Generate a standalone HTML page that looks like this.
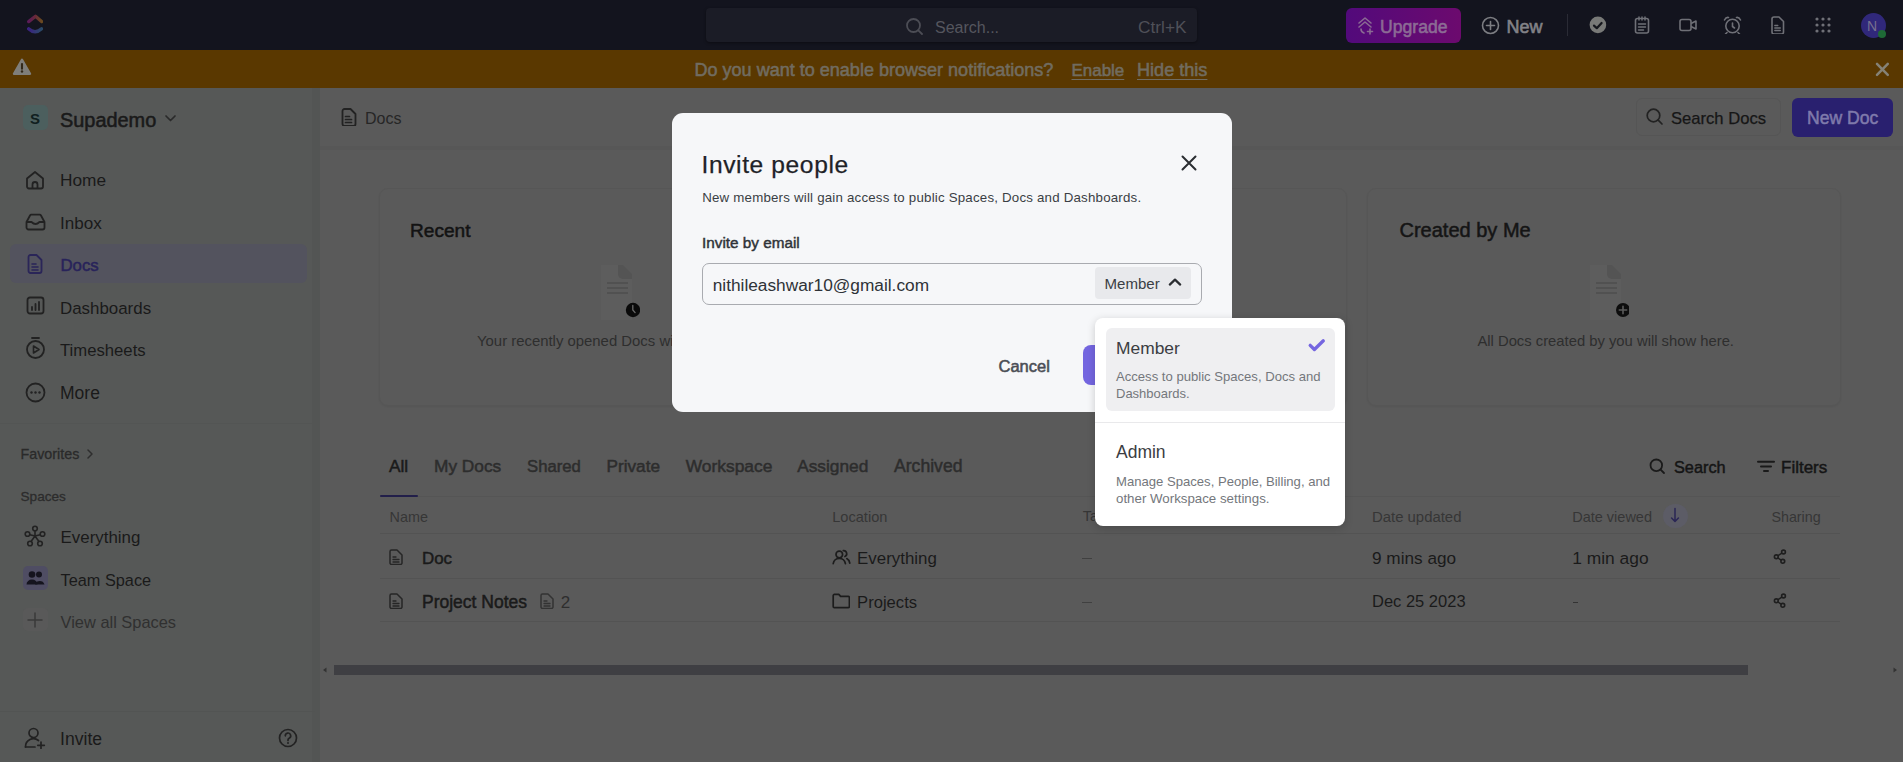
<!DOCTYPE html>
<html><head><meta charset="utf-8"><title>Docs</title>
<style>
html,body{margin:0;padding:0;width:1903px;height:762px;overflow:hidden;background:#5b5b5b}
body{position:relative;font-family:"Liberation Sans",sans-serif}
.t{position:absolute;line-height:1;white-space:nowrap}
.r{position:absolute;display:block}
.m{display:inline-block;width:0;height:0}
</style></head><body>
<div class="r" style="left:0px;top:0px;width:1903px;height:50px;background:#13141e"></div>
<svg class="r" style="left:24px;top:12px;" width="22" height="24" viewBox="0 0 22 24"><defs><linearGradient id="lg1" x1="0" x2="1"><stop offset="0" stop-color="#5c1a58"/><stop offset=".5" stop-color="#682a3a"/><stop offset="1" stop-color="#6a4a20"/></linearGradient>
<linearGradient id="lg2" x1="0" x2="1"><stop offset="0" stop-color="#3a2280"/><stop offset="1" stop-color="#2a4a68"/></linearGradient><filter id="bl"><feGaussianBlur stdDeviation="0.45"/></filter></defs>
<g filter="url(#bl)"><path d="M4.7 9.6 L11.5 4.2 L17.6 9.6" fill="none" stroke="url(#lg1)" stroke-width="3.3" stroke-linecap="round" stroke-linejoin="round"/>
<path d="M4.6 16.8 Q11 22.8 17.6 16.8" fill="none" stroke="url(#lg2)" stroke-width="3.3" stroke-linecap="round"/></g></svg>
<div class="r" style="left:706px;top:8px;width:491px;height:33.5px;background:#1b1c26;border-radius:4px;box-shadow:0 1px 3px rgba(0,0,0,.4)"></div>
<svg class="r" style="left:905px;top:17px;" width="20" height="18" viewBox="0 0 20 18"><circle cx="8.5" cy="8.5" r="6.5" fill="none" stroke="#4c4d55" stroke-width="1.8"/><path d="M13.3 13.3 L17 17" stroke="#4c4d55" stroke-width="1.8" stroke-linecap="round"/></svg>
<div class="t " id="t0" style="left:935px;top:20.00px;font-size:16px;color:#55565e;font-weight:400;">Search...<i class="m"></i></div>
<div class="t " id="t1" style="left:1138px;top:19.00px;font-size:17.3px;color:#4f5058;font-weight:400;">Ctrl+K<i class="m"></i></div>
<div class="r" style="left:1345.5px;top:8px;width:115px;height:34.5px;background:linear-gradient(90deg,#520a7b,#6c0a6e);border-radius:6px"></div>
<svg class="r" style="left:1356px;top:16px;" width="19" height="19" viewBox="0 0 19 19"><path d="M3 7 L9 2 L15 7 M3 11 L9 6 L15 11" fill="none" stroke="#8a6a93" stroke-width="1.6" stroke-linecap="round" stroke-linejoin="round"/><path d="M5 13 Q5 16 8 17 M14 13 v5 M11.5 15.5 h5" fill="none" stroke="#8a6a93" stroke-width="1.6" stroke-linecap="round"/></svg>
<div class="t " id="t2" style="left:1380px;top:19.00px;font-size:17.6px;color:#8c6c95;font-weight:400;-webkit-text-stroke:0.55px #8c6c95;">Upgrade<i class="m"></i></div>
<svg class="r" style="left:1481px;top:16px;" width="19" height="19" viewBox="0 0 19 19"><circle cx="9.5" cy="9.5" r="8" fill="none" stroke="#7c7d82" stroke-width="1.6"/><path d="M9.5 5.5 v8 M5.5 9.5 h8" stroke="#7c7d82" stroke-width="1.6" stroke-linecap="round"/></svg>
<div class="t " id="t3" style="left:1506.5px;top:17.50px;font-size:18px;color:#828287;font-weight:400;-webkit-text-stroke:0.6px #828287;">New<i class="m"></i></div>
<div class="r" style="left:1567px;top:14px;width:1px;height:22px;background:#2a2b35"></div>
<svg class="r" style="left:1589px;top:16px;" width="18" height="18" viewBox="0 0 18 18"><circle cx="8.9" cy="8.9" r="8.3" fill="#787977"/><path d="M5 9.6 L7.8 12.2 L12.6 7" fill="none" stroke="#15161c" stroke-width="2.2" stroke-linecap="round" stroke-linejoin="round"/></svg>
<svg class="r" style="left:1634px;top:16px;" width="17" height="18" viewBox="0 0 17 18"><rect x="1.5" y="2.5" width="13" height="14.5" rx="2" fill="none" stroke="#6f7077" stroke-width="1.6"/><path d="M5 1 v3 M8 1 v3 M11 1 v3 M4.5 8 h7 M4.5 11 h7 M4.5 14 h5" stroke="#6f7077" stroke-width="1.5" stroke-linecap="round"/></svg>
<svg class="r" style="left:1679px;top:18px;" width="18" height="14" viewBox="0 0 18 14"><rect x="1" y="1.5" width="11" height="11" rx="2" fill="none" stroke="#6f7077" stroke-width="1.6"/><path d="M12 5.5 L17 3 V11 L12 8.5" fill="none" stroke="#6f7077" stroke-width="1.6" stroke-linejoin="round"/></svg>
<svg class="r" style="left:1723px;top:16px;" width="19" height="18" viewBox="0 0 19 18"><circle cx="9.5" cy="10" r="6.7" fill="none" stroke="#6f7077" stroke-width="1.6"/><path d="M9.5 7 v3.5 l2 1.5" fill="none" stroke="#6f7077" stroke-width="1.6" stroke-linecap="round"/><path d="M1.5 4 Q3 1 5.5 1.5 M17.5 4 Q16 1 13.5 1.5 M4 16.5 l-1.5 1.5 M15 16.5 l1.5 1.5" fill="none" stroke="#6f7077" stroke-width="1.6" stroke-linecap="round"/></svg>
<svg class="r" style="left:1770px;top:16px;" width="15" height="18" viewBox="0 0 15 18"><path d="M2 3 a2 2 0 0 1 2-2 h5 l4.5 4.5 v10.5 a2 2 0 0 1 -2 2 h-7.5 a2 2 0 0 1 -2-2z" fill="none" stroke="#6f7077" stroke-width="1.6" stroke-linejoin="round"/><path d="M4.8 9.5 h3 M4.8 12 h5.5 M4.8 14.5 h5.5" stroke="#6f7077" stroke-width="1.4" stroke-linecap="round"/></svg>
<svg class="r" style="left:1815px;top:17px;" width="16" height="16" viewBox="0 0 16 16"><circle cx="2" cy="2" r="1.6" fill="#6f7077"/><circle cx="2" cy="8" r="1.6" fill="#6f7077"/><circle cx="2" cy="14" r="1.6" fill="#6f7077"/><circle cx="8" cy="2" r="1.6" fill="#6f7077"/><circle cx="8" cy="8" r="1.6" fill="#6f7077"/><circle cx="8" cy="14" r="1.6" fill="#6f7077"/><circle cx="14" cy="2" r="1.6" fill="#6f7077"/><circle cx="14" cy="8" r="1.6" fill="#6f7077"/><circle cx="14" cy="14" r="1.6" fill="#6f7077"/></svg>
<div class="r" style="left:1861px;top:13px;width:25px;height:25px;background:#30287a;border-radius:50%"></div>
<div class="t " id="t4" style="left:1867px;top:18.51px;font-size:14px;color:#77718f;font-weight:400;">N<i class="m"></i></div>
<div class="r" style="left:1878px;top:29.5px;width:8px;height:8px;background:#1e6a36;border-radius:50%"></div>
<div class="r" style="left:0px;top:49.5px;width:1903px;height:38.5px;background:#5a3800"></div>
<svg class="r" style="left:12px;top:57px;" width="20" height="19" viewBox="0 0 20 19"><path d="M10 2.8 L18 16.8 H2 Z" fill="#7f7e7a" stroke="#7f7e7a" stroke-width="2.4" stroke-linejoin="round"/><path d="M10 7 v4.8" stroke="#33291a" stroke-width="2.1" stroke-linecap="round"/><circle cx="10" cy="14.5" r="1.2" fill="#33291a"/></svg>
<div class="t " id="t5" style="left:694.5px;top:61.00px;font-size:18.05px;color:#716c60;font-weight:400;-webkit-text-stroke:0.55px #716c60;">Do you want to enable browser notifications?<i class="m"></i></div>
<div class="t " id="t6" style="left:1071.5px;top:63.00px;font-size:16.95px;color:#716c60;font-weight:400;text-decoration:underline;text-underline-offset:3px;-webkit-text-stroke:0.55px #716c60;">Enable<i class="m"></i></div>
<div class="t " id="t7" style="left:1137px;top:61.00px;font-size:18.1px;color:#716c60;font-weight:400;text-decoration:underline;text-underline-offset:3px;-webkit-text-stroke:0.55px #716c60;">Hide this<i class="m"></i></div>
<svg class="r" style="left:1875px;top:62px;" width="15" height="15" viewBox="0 0 15 15"><path d="M2 1.8 L12.8 12.8 M12.8 1.8 L2 12.8" stroke="#858276" stroke-width="2.5" stroke-linecap="round"/></svg>
<div class="r" style="left:0px;top:88px;width:319px;height:674px;background:#565857"></div>
<div class="r" style="left:312px;top:88px;width:8px;height:674px;background:#535554"></div>
<div class="r" style="left:23px;top:105px;width:25px;height:25px;background:#4c5f5e;border-radius:5px"></div>
<div class="t " id="t8" style="left:30px;top:111.01px;font-size:15px;color:#10201f;font-weight:700;">S<i class="m"></i></div>
<div class="t " id="t9" style="left:60px;top:111.00px;font-size:19.9px;color:#1a1a1a;font-weight:400;-webkit-text-stroke:0.55px #1a1a1a;">Supademo<i class="m"></i></div>
<svg class="r" style="left:164px;top:114px;" width="13" height="9" viewBox="0 0 13 9"><path d="M2 2 L6.5 6.5 L11 2" fill="none" stroke="#2a2a2a" stroke-width="1.7" stroke-linecap="round" stroke-linejoin="round"/></svg>
<div class="r" style="left:10px;top:244px;width:297px;height:39px;background:#53535e;border-radius:6px"></div>
<svg class="r" style="left:25px;top:170px;" width="20" height="20" viewBox="0 0 20 20"><path d="M2 8.5 L10 2 L18 8.5 V16.5 a2 2 0 0 1 -2 2 H4 a2 2 0 0 1 -2-2z" fill="none" stroke="#222222" stroke-width="1.8" stroke-linejoin="round"/><path d="M7.5 18.5 v-4 a2.5 2.5 0 0 1 5 0 v4" fill="none" stroke="#222222" stroke-width="1.8"/></svg>
<div class="t " id="t10" style="left:60px;top:172.00px;font-size:17.3px;color:#1a1a1a;font-weight:400;">Home<i class="m"></i></div>
<svg class="r" style="left:25px;top:213px;" width="21" height="18" viewBox="0 0 21 18"><path d="M1.5 9 L5 2.5 a1.5 1.5 0 0 1 1.3-.8 h8.4 a1.5 1.5 0 0 1 1.3.8 L19.5 9 V14.5 a2 2 0 0 1 -2 2 H3.5 a2 2 0 0 1 -2-2z" fill="none" stroke="#222222" stroke-width="1.8" stroke-linejoin="round"/><path d="M1.5 9 H6.5 Q10.5 13 14.5 9 H19.5" fill="none" stroke="#222222" stroke-width="1.8" stroke-linejoin="round"/></svg>
<div class="t " id="t11" style="left:60px;top:215.00px;font-size:17.1px;color:#1a1a1a;font-weight:400;">Inbox<i class="m"></i></div>
<svg class="r" style="left:27px;top:254px;" width="16" height="20" viewBox="0 0 16 20"><path d="M1.5 3 a2 2 0 0 1 2-2 h6 l5 5 v11 a2 2 0 0 1 -2 2 h-9 a2 2 0 0 1 -2-2z" fill="none" stroke="#2a2558" stroke-width="1.8" stroke-linejoin="round"/><path d="M5 10 h4 M5 13 h6 M5 16 h6" stroke="#2a2558" stroke-width="1.6" stroke-linecap="round"/></svg>
<div class="t " id="t12" style="left:60.5px;top:258.00px;font-size:16.8px;color:#28235a;font-weight:400;-webkit-text-stroke:0.5px #28235a;">Docs<i class="m"></i></div>
<svg class="r" style="left:26px;top:296px;" width="19" height="19" viewBox="0 0 19 19"><rect x="1.5" y="1.5" width="16" height="16" rx="2.5" fill="none" stroke="#222222" stroke-width="1.8"/><path d="M6 14 v-3 M9.5 14 v-6 M13 14 v-8" stroke="#222222" stroke-width="1.8" stroke-linecap="round"/></svg>
<div class="t " id="t13" style="left:60px;top:300.61px;font-size:16.9px;color:#1a1a1a;font-weight:400;">Dashboards<i class="m"></i></div>
<svg class="r" style="left:25px;top:336px;" width="21" height="24" viewBox="0 0 21 24"><circle cx="10.5" cy="13.5" r="8.5" fill="none" stroke="#222222" stroke-width="1.8"/><path d="M7 2 h7" stroke="#222222" stroke-width="1.8" stroke-linecap="round"/><path d="M8.5 10 L14 13.5 L8.5 17z" fill="none" stroke="#222222" stroke-width="1.6" stroke-linejoin="round"/></svg>
<div class="t " id="t14" style="left:60px;top:342.71px;font-size:16.7px;color:#1a1a1a;font-weight:400;">Timesheets<i class="m"></i></div>
<svg class="r" style="left:25px;top:382px;" width="21" height="21" viewBox="0 0 21 21"><circle cx="10.5" cy="10.5" r="9" fill="none" stroke="#222222" stroke-width="1.8"/><circle cx="6.5" cy="10.5" r="1.2" fill="#222222"/><circle cx="10.5" cy="10.5" r="1.2" fill="#222222"/><circle cx="14.5" cy="10.5" r="1.2" fill="#222222"/></svg>
<div class="t " id="t15" style="left:60px;top:384.50px;font-size:17.5px;color:#1a1a1a;font-weight:400;">More<i class="m"></i></div>
<div class="t " id="t16" style="left:20.5px;top:447.01px;font-size:14.3px;color:#2a2a2a;font-weight:400;-webkit-text-stroke:0.3px #2a2a2a;">Favorites<i class="m"></i></div>
<svg class="r" style="left:86px;top:448px;" width="8" height="12" viewBox="0 0 8 12"><path d="M2 2 L6 6 L2 10" fill="none" stroke="#2e2e2e" stroke-width="1.5" stroke-linecap="round" stroke-linejoin="round"/></svg>
<div class="t " id="t17" style="left:20.5px;top:490.01px;font-size:13.6px;color:#2c2c2c;font-weight:400;-webkit-text-stroke:0.3px #2c2c2c;">Spaces<i class="m"></i></div>
<svg class="r" style="left:24px;top:525px;" width="22" height="22" viewBox="0 0 22 22"><circle cx="11" cy="3.5" r="2.3" fill="none" stroke="#222222" stroke-width="1.6"/><circle cx="3.5" cy="9" r="2.3" fill="none" stroke="#222222" stroke-width="1.6"/><circle cx="18.5" cy="9" r="2.3" fill="none" stroke="#222222" stroke-width="1.6"/><circle cx="6" cy="18.5" r="2.3" fill="none" stroke="#222222" stroke-width="1.6"/><circle cx="16" cy="18.5" r="2.3" fill="none" stroke="#222222" stroke-width="1.6"/><path d="M11 6 V11 M5.8 9.8 L11 11 L16.2 9.8 M7.2 16.3 L11 11 L14.8 16.3" fill="none" stroke="#222222" stroke-width="1.6"/></svg>
<div class="t " id="t18" style="left:60.6px;top:529.50px;font-size:16.9px;color:#1a1a1a;font-weight:400;">Everything<i class="m"></i></div>
<div class="r" style="left:23px;top:566px;width:25px;height:24px;background:#4f4d63;border-radius:5px"></div>
<svg class="r" style="left:26px;top:570px;" width="19" height="16" viewBox="0 0 19 16"><circle cx="6" cy="4.5" r="3.3" fill="#15141e"/><circle cx="13" cy="4.5" r="3" fill="#15141e"/><path d="M0.5 14.5 a5.5 5 0 0 1 11 0z" fill="#15141e"/><path d="M9 14.5 a5 5 0 0 1 9.5 0z" fill="#15141e"/></svg>
<div class="t " id="t19" style="left:60.6px;top:571.70px;font-size:16.3px;color:#1a1a1a;font-weight:400;">Team Space<i class="m"></i></div>
<div class="r" style="left:23px;top:608px;width:25px;height:23px;background:#595959;border-radius:5px"></div>
<svg class="r" style="left:27px;top:612px;" width="16" height="16" viewBox="0 0 16 16"><path d="M8 1 V15 M1 8 H15" stroke="#3a3a3a" stroke-width="1.5" stroke-linecap="round"/></svg>
<div class="t " id="t20" style="left:60.6px;top:614.00px;font-size:16.4px;color:#303030;font-weight:400;">View all Spaces<i class="m"></i></div>
<div class="r" style="left:0px;top:711px;width:315px;height:1px;background:#525453"></div>
<div class="r" style="left:0px;top:423px;width:315px;height:1px;background:#535554"></div>
<svg class="r" style="left:24px;top:727px;" width="22" height="22" viewBox="0 0 22 22"><circle cx="9.5" cy="6" r="4.5" fill="none" stroke="#222222" stroke-width="1.7"/><path d="M1.5 20 a8 8 0 0 1 13-6.5" fill="none" stroke="#222222" stroke-width="1.7" stroke-linecap="round"/><path d="M1.5 20 H11" stroke="#222222" stroke-width="1.7" stroke-linecap="round"/><path d="M17 15 v6.5 M13.8 18.3 h6.5" stroke="#222222" stroke-width="1.7" stroke-linecap="round"/></svg>
<div class="t " id="t21" style="left:60px;top:730.61px;font-size:17.6px;color:#1a1a1a;font-weight:400;">Invite<i class="m"></i></div>
<svg class="r" style="left:278px;top:728px;" width="20" height="20" viewBox="0 0 20 20"><circle cx="10" cy="10" r="8.5" fill="none" stroke="#222222" stroke-width="1.7"/><path d="M7.3 7.8 a2.7 2.7 0 1 1 3.8 2.4 c-.8.4 -1.1 .9 -1.1 1.8 v.5" fill="none" stroke="#222222" stroke-width="1.7" stroke-linecap="round"/><circle cx="10" cy="15" r="1" fill="#222222"/></svg>
<div class="r" style="left:320px;top:88px;width:1583px;height:674px;background:#5a5a5a"></div>
<div class="r" style="left:320px;top:146px;width:1583px;height:4px;background:#575757"></div>
<svg class="r" style="left:341px;top:108px;" width="16" height="18" viewBox="0 0 16 18"><path d="M1.5 3 a2 2 0 0 1 2-2 h6 l5 5 v10 a2 2 0 0 1 -2 2 h-9 a2 2 0 0 1 -2-2z" fill="none" stroke="#222" stroke-width="1.8" stroke-linejoin="round"/><path d="M4.5 8.5 h4 M4.5 11.5 h6 M4.5 14.5 h6" stroke="#222" stroke-width="1.7" stroke-linecap="round"/></svg>
<div class="t " id="t22" style="left:365px;top:110.50px;font-size:16px;color:#262626;font-weight:400;">Docs<i class="m"></i></div>
<div class="r" style="left:1636px;top:98px;width:145px;height:38px;border:1px solid #555;border-radius:6px;box-sizing:border-box"></div>
<svg class="r" style="left:1646px;top:108px;" width="18" height="18" viewBox="0 0 18 18"><circle cx="7.5" cy="7.5" r="6.3" fill="none" stroke="#222" stroke-width="1.7"/><path d="M12.2 12.2 L16 16" stroke="#222" stroke-width="1.7" stroke-linecap="round"/></svg>
<div class="t " id="t23" style="left:1671px;top:110.71px;font-size:16.6px;color:#161616;font-weight:400;-webkit-text-stroke:0.25px #161616;">Search Docs<i class="m"></i></div>
<div class="r" style="left:1792px;top:98px;width:101px;height:39px;background:#29206f;border-radius:6px"></div>
<div class="t " id="t24" style="left:1807px;top:109.70px;font-size:17.6px;color:#7f7aab;font-weight:400;-webkit-text-stroke:0.5px #7f7aab;">New Doc<i class="m"></i></div>
<div class="r" style="left:379px;top:188px;width:474px;height:218px;border:1px solid #565656;border-radius:9px;box-sizing:border-box;box-shadow:0 1px 2px rgba(0,0,0,.06)"></div>
<div class="r" style="left:873px;top:188px;width:474px;height:218px;border:1px solid #565656;border-radius:9px;box-sizing:border-box;box-shadow:0 1px 2px rgba(0,0,0,.06)"></div>
<div class="r" style="left:1367px;top:188px;width:474px;height:218px;border:1px solid #565656;border-radius:9px;box-sizing:border-box;box-shadow:0 1px 2px rgba(0,0,0,.06)"></div>
<div class="t " id="t25" style="left:410px;top:221.32px;font-size:19.1px;color:#131313;font-weight:400;-webkit-text-stroke:0.5px #131313;">Recent<i class="m"></i></div>
<div class="t " id="t26" style="left:1399.5px;top:220.01px;font-size:20.0px;color:#151515;font-weight:400;-webkit-text-stroke:0.5px #151515;">Created by Me<i class="m"></i></div>
<svg class="r" style="left:599.5px;top:263.5px;" width="40" height="58" viewBox="0 0 40 58"><path d="M1 1 h22 l9 9 v46 h-31z" fill="#5d5d5d"/><path d="M18 1 h5 l9 9 v5 h-9 a5 5 0 0 1 -5-5z" fill="#545454"/>
<path d="M7 19 h21 M7 24 h21 M7 29 h21" stroke="#4e4e4e" stroke-width="1.5"/><circle cx="33" cy="46" r="7.2" fill="#0a0a0a"/><path d="M32.8 41.5 v4.5 l2.3 2.6" stroke="#6a6a6a" stroke-width="1.3" fill="none" stroke-linecap="round"/></svg>
<svg class="r" style="left:1588.5px;top:263.5px;" width="40" height="58" viewBox="0 0 40 58"><path d="M1 1 h22 l9 9 v46 h-31z" fill="#5d5d5d"/><path d="M18 1 h5 l9 9 v5 h-9 a5 5 0 0 1 -5-5z" fill="#545454"/>
<path d="M7 19 h21 M7 24 h21 M7 29 h21" stroke="#4e4e4e" stroke-width="1.5"/><circle cx="34" cy="46" r="7" fill="#0d0d0d"/><path d="M34 42.3 v7.4 M30.3 46 h7.4" stroke="#5b5b5b" stroke-width="1.6" stroke-linecap="round"/></svg>
<div class="t " id="t27" style="left:477px;top:334.31px;font-size:14.9px;color:#2e2e2e;font-weight:400;">Your recently opened Docs will show here.<i class="m"></i></div>
<div class="t " id="t28" style="left:1477.4px;top:334.01px;font-size:14.8px;color:#2e2e2e;font-weight:400;">All Docs created by you will show here.<i class="m"></i></div>
<div class="t " id="t29" style="left:389px;top:458.41px;font-size:17.3px;color:#1a1a1a;font-weight:400;-webkit-text-stroke:0.5px #1a1a1a;">All<i class="m"></i></div>
<div class="t " id="t30" style="left:434px;top:458.41px;font-size:17.3px;color:#2d2d2d;font-weight:400;-webkit-text-stroke:0.5px #2d2d2d;">My Docs<i class="m"></i></div>
<div class="t " id="t31" style="left:527px;top:459.41px;font-size:16.7px;color:#2d2d2d;font-weight:400;-webkit-text-stroke:0.5px #2d2d2d;">Shared<i class="m"></i></div>
<div class="t " id="t32" style="left:606.5px;top:458.41px;font-size:17.2px;color:#2d2d2d;font-weight:400;-webkit-text-stroke:0.5px #2d2d2d;">Private<i class="m"></i></div>
<div class="t " id="t33" style="left:685.7px;top:458.41px;font-size:17.4px;color:#2d2d2d;font-weight:400;-webkit-text-stroke:0.5px #2d2d2d;">Workspace<i class="m"></i></div>
<div class="t " id="t34" style="left:797.2px;top:458.41px;font-size:17.3px;color:#2d2d2d;font-weight:400;-webkit-text-stroke:0.5px #2d2d2d;">Assigned<i class="m"></i></div>
<div class="t " id="t35" style="left:894px;top:458.41px;font-size:17.6px;color:#2d2d2d;font-weight:400;-webkit-text-stroke:0.5px #2d2d2d;">Archived<i class="m"></i></div>
<div class="r" style="left:380px;top:496px;width:1460px;height:1px;background:#555555"></div>
<div class="r" style="left:380px;top:494.8px;width:38px;height:2.2px;background:#221f4a;border-radius:1px"></div>
<svg class="r" style="left:1649px;top:458px;" width="17" height="17" viewBox="0 0 17 17"><circle cx="7.3" cy="7.3" r="5.8" fill="none" stroke="#1a1a1a" stroke-width="1.8"/><path d="M11.6 11.6 L15 15" stroke="#1a1a1a" stroke-width="1.8" stroke-linecap="round"/></svg>
<div class="t " id="t36" style="left:1674px;top:459.10px;font-size:16.3px;color:#151515;font-weight:400;-webkit-text-stroke:0.45px #151515;">Search<i class="m"></i></div>
<svg class="r" style="left:1756px;top:459px;" width="20" height="15" viewBox="0 0 20 15"><path d="M2 2.8 h16 M5 7.4 h10 M8 12 h4" stroke="#1a1a1a" stroke-width="2" stroke-linecap="round"/></svg>
<div class="t " id="t37" style="left:1781px;top:459.11px;font-size:17.0px;color:#151515;font-weight:400;-webkit-text-stroke:0.45px #151515;">Filters<i class="m"></i></div>
<div class="t " id="t38" style="left:389.5px;top:509.81px;font-size:14.4px;color:#363636;font-weight:400;">Name<i class="m"></i></div>
<div class="t " id="t39" style="left:832.2px;top:510.01px;font-size:14.6px;color:#363636;font-weight:400;">Location<i class="m"></i></div>
<div class="t " id="t40" style="left:1082.7px;top:509.01px;font-size:14.5px;color:#363636;font-weight:400;">Tags<i class="m"></i></div>
<div class="t " id="t41" style="left:1372px;top:510.01px;font-size:14.9px;color:#363636;font-weight:400;">Date updated<i class="m"></i></div>
<div class="t " id="t42" style="left:1572.2px;top:510.01px;font-size:14.5px;color:#363636;font-weight:400;">Date viewed<i class="m"></i></div>
<div class="r" style="left:1663px;top:503.5px;width:24.5px;height:24.5px;background:#5c5c66;border-radius:50%"></div>
<svg class="r" style="left:1668px;top:506px;" width="14" height="18" viewBox="0 0 14 18"><path d="M7 2.5 V15.5 M3.6 12 L7 15.5 L10.4 12" fill="none" stroke="#2a2655" stroke-width="1.5" stroke-linecap="round" stroke-linejoin="round"/></svg>
<div class="t " id="t43" style="left:1771.4px;top:510.01px;font-size:14.3px;color:#363636;font-weight:400;">Sharing<i class="m"></i></div>
<div class="r" style="left:380px;top:533px;width:1460px;height:1px;background:#535353"></div>
<div class="r" style="left:380px;top:578px;width:1460px;height:1px;background:#535353"></div>
<div class="r" style="left:380px;top:621px;width:1460px;height:1px;background:#535353"></div>
<svg class="r" style="left:389px;top:549px;" width="14" height="16" viewBox="0 0 14 16"><path d="M1 2.5 a1.5 1.5 0 0 1 1.5-1.5 h5.5 l5 5 v8 a1.5 1.5 0 0 1 -1.5 1.5 h-9 a1.5 1.5 0 0 1 -1.5-1.5z" fill="none" stroke="#262626" stroke-width="1.5" stroke-linejoin="round"/><path d="M4 8 h3 M4 10.5 h6 M4 13 h6" stroke="#262626" stroke-width="1.3" stroke-linecap="round"/></svg>
<div class="t " id="t44" style="left:422px;top:550.50px;font-size:16.9px;color:#1a1a1a;font-weight:400;-webkit-text-stroke:0.5px #1a1a1a;">Doc<i class="m"></i></div>
<svg class="r" style="left:389px;top:593px;" width="14" height="16" viewBox="0 0 14 16"><path d="M1 2.5 a1.5 1.5 0 0 1 1.5-1.5 h5.5 l5 5 v8 a1.5 1.5 0 0 1 -1.5 1.5 h-9 a1.5 1.5 0 0 1 -1.5-1.5z" fill="none" stroke="#262626" stroke-width="1.5" stroke-linejoin="round"/><path d="M4 8 h3 M4 10.5 h6 M4 13 h6" stroke="#262626" stroke-width="1.3" stroke-linecap="round"/></svg>
<div class="t " id="t45" style="left:422px;top:593.61px;font-size:17.5px;color:#1a1a1a;font-weight:400;-webkit-text-stroke:0.5px #1a1a1a;">Project Notes<i class="m"></i></div>
<svg class="r" style="left:540px;top:593px;" width="14" height="16" viewBox="0 0 14 16"><path d="M1 2.5 a1.5 1.5 0 0 1 1.5-1.5 h5.5 l5 5 v8 a1.5 1.5 0 0 1 -1.5 1.5 h-9 a1.5 1.5 0 0 1 -1.5-1.5z" fill="none" stroke="#333" stroke-width="1.5" stroke-linejoin="round"/><path d="M4 8 h3 M4 10.5 h6 M4 13 h6" stroke="#333" stroke-width="1.3" stroke-linecap="round"/></svg>
<div class="t " id="t46" style="left:560.8px;top:593.61px;font-size:17px;color:#2e2e2e;font-weight:400;">2<i class="m"></i></div>
<svg class="r" style="left:832px;top:549px;" width="19" height="16" viewBox="0 0 19 16"><circle cx="7.3" cy="5.5" r="3.3" fill="none" stroke="#1c1c1c" stroke-width="1.7"/><path d="M1.2 14.6 a6.2 6.2 0 0 1 12.2 0" fill="none" stroke="#1c1c1c" stroke-width="1.7" stroke-linecap="round"/><path d="M11.3 1.6 a3.1 3.1 0 0 1 1.6 5.9 M14.8 9.6 a6 6 0 0 1 3 4.6" fill="none" stroke="#1c1c1c" stroke-width="1.7" stroke-linecap="round"/></svg>
<div class="t " id="t47" style="left:857.1px;top:550.50px;font-size:16.9px;color:#1a1a1a;font-weight:400;">Everything<i class="m"></i></div>
<svg class="r" style="left:832px;top:593px;" width="18" height="16" viewBox="0 0 18 16"><path d="M1.2 2.6 a1.2 1.2 0 0 1 1.2-1.2 h4.4 l1.8 2 h7.6 a1.2 1.2 0 0 1 1.2 1.2 v8.8 a1.2 1.2 0 0 1 -1.2 1.2 h-13.8 a1.2 1.2 0 0 1 -1.2-1.2z" fill="none" stroke="#1c1c1c" stroke-width="1.7" stroke-linejoin="round"/></svg>
<div class="t " id="t48" style="left:857.1px;top:594.61px;font-size:16.6px;color:#1a1a1a;font-weight:400;">Projects<i class="m"></i></div>
<div class="r" style="left:1082px;top:557.5px;width:10px;height:1px;background:#404040"></div>
<div class="r" style="left:1082px;top:601.5px;width:10px;height:1px;background:#404040"></div>
<div class="t " id="t49" style="left:1372px;top:549.71px;font-size:17.2px;color:#1a1a1a;font-weight:400;">9 mins ago<i class="m"></i></div>
<div class="t " id="t50" style="left:1572.2px;top:549.70px;font-size:17.4px;color:#1a1a1a;font-weight:400;">1 min ago<i class="m"></i></div>
<div class="t " id="t51" style="left:1372px;top:593.22px;font-size:16.5px;color:#1a1a1a;font-weight:400;">Dec 25 2023<i class="m"></i></div>
<div class="r" style="left:1573px;top:601.5px;width:5px;height:1.2px;background:#333"></div>
<svg class="r" style="left:1773px;top:549px;" width="14" height="16" viewBox="0 0 14 16"><circle cx="10.5" cy="3" r="1.9" fill="none" stroke="#1e1e1e" stroke-width="1.6"/><circle cx="3.3" cy="7.8" r="1.9" fill="none" stroke="#1e1e1e" stroke-width="1.6"/><circle cx="9.8" cy="12.3" r="1.9" fill="none" stroke="#1e1e1e" stroke-width="1.6"/><path d="M5 6.6 L8.9 4.1 M5 9 L8.2 11.2" stroke="#1e1e1e" stroke-width="1.5"/></svg>
<svg class="r" style="left:1773px;top:593px;" width="14" height="16" viewBox="0 0 14 16"><circle cx="10.5" cy="3" r="1.9" fill="none" stroke="#1e1e1e" stroke-width="1.6"/><circle cx="3.3" cy="7.8" r="1.9" fill="none" stroke="#1e1e1e" stroke-width="1.6"/><circle cx="9.8" cy="12.3" r="1.9" fill="none" stroke="#1e1e1e" stroke-width="1.6"/><path d="M5 6.6 L8.9 4.1 M5 9 L8.2 11.2" stroke="#1e1e1e" stroke-width="1.5"/></svg>
<div class="r" style="left:333.6px;top:665px;width:1414px;height:10px;background:#3f3f43"></div>
<svg class="r" style="left:322px;top:667px;" width="6" height="6" viewBox="0 0 6 6"><path d="M4.5 0.5 L1 3 L4.5 5.5z" fill="#333"/></svg>
<svg class="r" style="left:1892px;top:667px;" width="6" height="6" viewBox="0 0 6 6"><path d="M1.5 0.5 L5 3 L1.5 5.5z" fill="#333"/></svg>
<div class="r" style="left:672px;top:113px;width:560px;height:299px;background:#f6f7f9;border-radius:11px"></div>
<div class="t " id="t52" style="left:701.5px;top:152.51px;font-size:24.6px;color:#1e2227;font-weight:400;letter-spacing:0.6px;-webkit-text-stroke:0.25px #1e2227;">Invite people<i class="m"></i></div>
<svg class="r" style="left:1181px;top:155px;" width="16" height="16" viewBox="0 0 16 16"><path d="M1.5 1.5 L14.5 14.5 M14.5 1.5 L1.5 14.5" stroke="#2a2d31" stroke-width="2" stroke-linecap="round"/></svg>
<div class="t " id="t53" style="left:702.2px;top:191.21px;font-size:13.3px;color:#3a3e44;font-weight:400;letter-spacing:0.2px;">New members will gain access to public Spaces, Docs and Dashboards.<i class="m"></i></div>
<div class="t " id="t54" style="left:702px;top:235.40px;font-size:15.3px;color:#2f3338;font-weight:400;-webkit-text-stroke:0.45px #2f3338;">Invite by email<i class="m"></i></div>
<div class="r" style="left:702px;top:263px;width:500px;height:42px;border:1px solid #a9abb0;border-radius:7px;box-sizing:border-box;background:#f6f7f9"></div>
<div class="t " id="t55" style="left:712.7px;top:276.71px;font-size:17.3px;color:#2e3237;font-weight:400;">nithileashwar10@gmail.com<i class="m"></i></div>
<div class="r" style="left:1095px;top:267px;width:95.5px;height:31.5px;background:#e8e9ec;border-radius:4px"></div>
<div class="t " id="t56" style="left:1104.5px;top:275.60px;font-size:15.05px;color:#3b3f45;font-weight:400;">Member<i class="m"></i></div>
<svg class="r" style="left:1167px;top:277px;" width="16" height="11" viewBox="0 0 16 11"><path d="M2.8 7.6 L8 2.6 L13.2 7.6" fill="none" stroke="#2a2d31" stroke-width="2.2" stroke-linecap="round" stroke-linejoin="round"/></svg>
<div class="t " id="t57" style="left:998.5px;top:357.50px;font-size:16.5px;color:#4a4e55;font-weight:400;-webkit-text-stroke:0.55px #4a4e55;">Cancel<i class="m"></i></div>
<div class="r" style="left:1083px;top:345px;width:60px;height:40px;background:#7466e0;border-radius:8px"></div>
<div class="r" style="left:1095px;top:318px;width:250px;height:208px;background:#ffffff;border-radius:8px;box-shadow:0 2px 8px rgba(0,0,0,.18)"></div>
<div class="r" style="left:1106px;top:328px;width:228.5px;height:83px;background:#efeff1;border-radius:6px"></div>
<div class="t " id="t58" style="left:1116px;top:339.91px;font-size:17.4px;color:#3b3d42;font-weight:400;">Member<i class="m"></i></div>
<svg class="r" style="left:1306px;top:337px;" width="21" height="16" viewBox="0 0 21 16"><path d="M4.2 8.3 L8.4 12.5 L17.3 3.8" fill="none" stroke="#7566e0" stroke-width="3.3" stroke-linecap="round" stroke-linejoin="round"/></svg>
<div class="t " id="t59" style="left:1116px;top:369.71px;font-size:13.1px;color:#74777c;font-weight:400;">Access to public Spaces, Docs and<i class="m"></i></div>
<div class="t " id="t60" style="left:1116px;top:387.00px;font-size:13.0px;color:#74777c;font-weight:400;">Dashboards.<i class="m"></i></div>
<div class="r" style="left:1095px;top:422px;width:250px;height:1px;background:#e9e9eb"></div>
<div class="t " id="t61" style="left:1116px;top:443.80px;font-size:17.5px;color:#3b3d42;font-weight:400;">Admin<i class="m"></i></div>
<div class="t " id="t62" style="left:1116px;top:475.00px;font-size:13.1px;color:#74777c;font-weight:400;">Manage Spaces, People, Billing, and<i class="m"></i></div>
<div class="t " id="t63" style="left:1116px;top:491.81px;font-size:13.3px;color:#74777c;font-weight:400;">other Workspace settings.<i class="m"></i></div>
</body></html>
